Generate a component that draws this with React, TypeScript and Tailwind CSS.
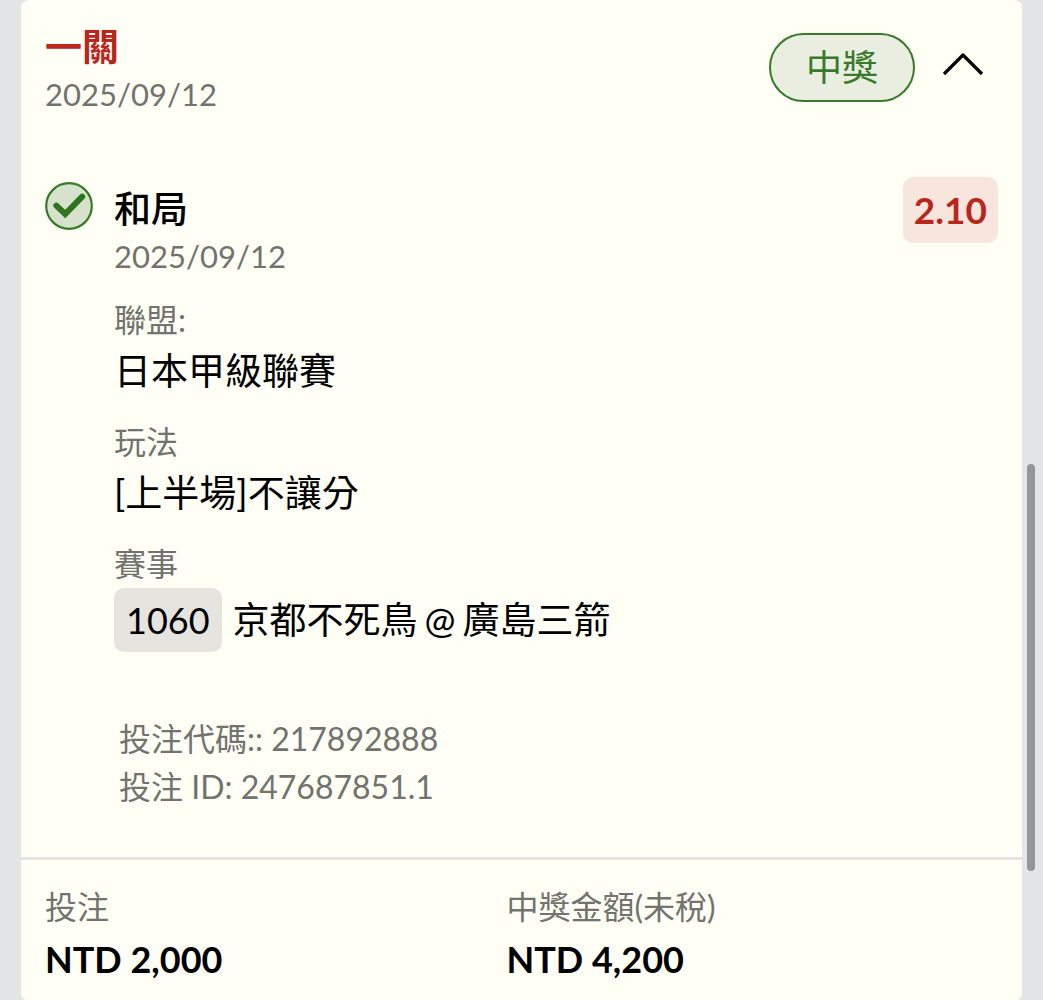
import { useState } from "react";

type FieldProps = {
  label: string;
  children: React.ReactNode;
};

function Field({ label, children }: FieldProps) {
  return (
    <div>
      <dt className="text-[32px] leading-[48px] text-[#72726e]">{label}</dt>
      <dd className="text-[37px] leading-[54px]">{children}</dd>
    </div>
  );
}

function Amount({ label, value }: { label: string; value: string }) {
  return (
    <div>
      <dt className="text-[32px] leading-[48px] text-[#72726e]">{label}</dt>
      <dd className="text-[36px] leading-[56px] font-bold">{value}</dd>
    </div>
  );
}

function WonIcon() {
  return (
    <svg viewBox="0 0 48 48" className="mt-[5px] size-12 shrink-0" aria-hidden>
      <circle cx="24" cy="24" r="22.8" fill="#d7e2cd" stroke="#38792a" strokeWidth="2.2" />
      <path
        d="M11.4 23.6 20.2 32 37.2 14.6"
        fill="none"
        stroke="#2f741f"
        strokeWidth="6"
        strokeLinecap="round"
      />
    </svg>
  );
}

export default function App() {
  const [open, setOpen] = useState(true);

  return (
    <main className="relative min-h-screen bg-[#e4e5e7] px-[21px] font-['Lato','Noto_Sans_CJK_TC',sans-serif] text-black">
      <article className="rounded-lg bg-[#fffff6]">
        <header className="flex items-start justify-between pt-[23px] pr-[31px] pl-6">
          <div>
            <h2 className="text-[37px] leading-[48px] font-bold text-[#b9261c]">一關</h2>
            <p className="text-[31px] leading-[46px] text-[#72726e]">2025/09/12</p>
          </div>
          <div className="flex items-center gap-5 pt-[10px]">
            <span className="rounded-full border-2 border-[#38792a] bg-[#eaeee0] px-[35px] py-2 text-[36px] leading-[49px] text-[#38792a]">
              中獎
            </span>
            <button
              type="button"
              aria-label="展開或收合"
              aria-expanded={open}
              onClick={() => setOpen(!open)}
              className="flex size-14 items-center justify-center"
            >
              <svg viewBox="0 0 56 56" className={open ? "size-14" : "size-14 rotate-180"} aria-hidden>
                <path
                  d="M9 34 28 15 47 34"
                  fill="none"
                  stroke="#000"
                  strokeWidth="3.2"
                  strokeLinejoin="round"
                />
              </svg>
            </button>
          </div>
        </header>

        {open && (
          <section className="flex items-start px-6 pt-[60px] pb-[46px]">
            <WonIcon />
            <div className="min-w-0 flex-1 pt-2 pl-[21px]">
              <h3 className="text-[37px] leading-[48px] font-medium">和局</h3>
              <p className="text-[31px] leading-[46px] text-[#72726e]">2025/09/12</p>
              <dl className="flex flex-col gap-5 pt-[17px]">
                <Field label="聯盟:">日本甲級聯賽</Field>
                <Field label="玩法">[上半場]不讓分</Field>
                <Field label="賽事">
                  <span className="flex items-center gap-[11px]">
                    <span className="rounded-[10px] bg-[#e6e4de] px-3 text-[36px] leading-[64px]">1060</span>
                    <span className="flex gap-[7px]">
                      <span>京都不死鳥</span>
                      <span>@</span>
                      <span>廣島三箭</span>
                    </span>
                  </span>
                </Field>
              </dl>
              <div className="pt-[63px] pl-[5px] text-[32px] leading-[48px] text-[#72726e]">
                <p>投注代碼:: 217892888</p>
                <p>投注 ID: 247687851.1</p>
              </div>
            </div>
            <strong className="rounded-[10px] bg-[#f8e6de] px-[11px] text-[37px] leading-[66px] text-[#b9261c]">
              2.10
            </strong>
          </section>
        )}

        <footer className="border-t-3 border-[#e5e5df]">
          <dl className="grid grid-cols-2 pt-[23px] pr-[54px] pb-[14px] pl-6">
            <Amount label="投注" value="NTD 2,000" />
            <Amount label="中獎金額(未稅)" value="NTD 4,200" />
          </dl>
        </footer>
      </article>

      <div className="absolute top-[464px] right-2 h-[407px] w-2 rounded-full bg-[#969698]" aria-hidden />
    </main>
  );
}
